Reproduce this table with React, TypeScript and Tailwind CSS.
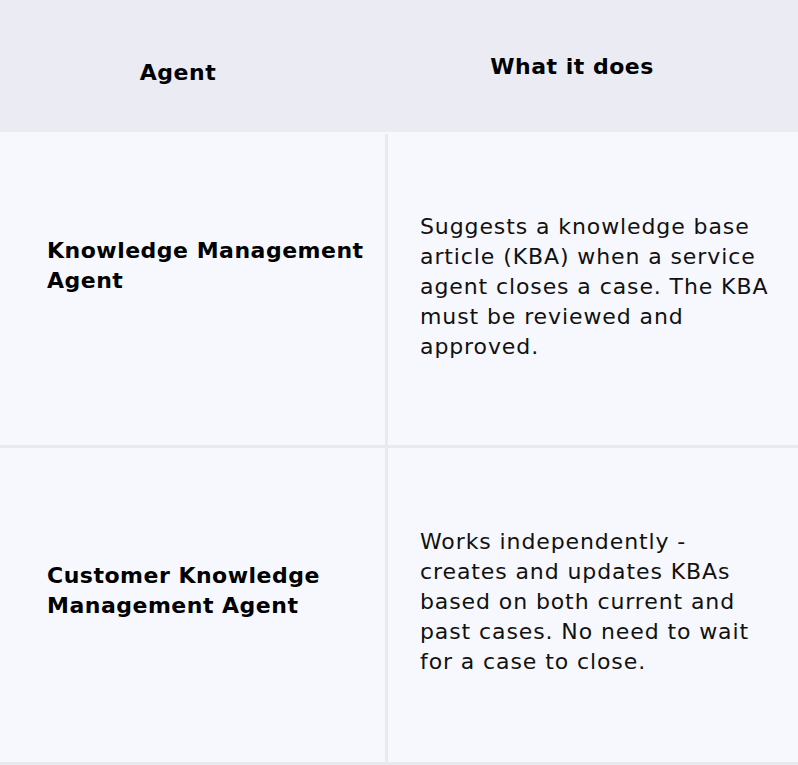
import React from "react";

const font = { fontFamily: "'DejaVu Sans', 'Noto Sans', sans-serif" };

export default function App() {
  return (
    <div className="w-[798px] h-[765px] bg-[#f7f8fd] text-[#111111]" style={font}>
      <div className="flex h-[132px] bg-[#ebebf4] font-bold text-[22px] leading-[30px] tracking-[0.5px] text-black">
        <div className="w-[385px] pr-[29px] pt-[58px] text-center">Agent</div>
        <div className="flex-1 pr-[39px] pt-[52px] text-center">What it does</div>
      </div>
      <div className="flex h-[316px] border-b-[3px] border-[#e8e8f1]">
        <div className="w-[385px] pl-[47px] pt-[104px] font-bold text-[22px] leading-[30px] tracking-[0.5px] text-black">
          Knowledge Management
          <br />
          Agent
        </div>
        <div className="flex-1 border-l-[3px] border-[#e8e8f1] mt-[2px] pl-[32px] pt-[78px] text-[22px] leading-[30px] tracking-[0.9px]">
          Suggests a knowledge base
          <br />
          article (KBA) when a service
          <br />
          agent closes a case. The KBA
          <br />
          must be reviewed and
          <br />
          approved.
        </div>
      </div>
      <div className="flex h-[317px] border-b-[3px] border-[#e8e8f1]">
        <div className="w-[385px] pl-[47px] pt-[113px] font-bold text-[22px] leading-[30px] tracking-[0.5px] text-black">
          Customer Knowledge
          <br />
          Management Agent
        </div>
        <div className="flex-1 border-l-[3px] border-[#e8e8f1] pl-[32px] pt-[79px] text-[22px] leading-[30px] tracking-[0.9px]">
          Works independently -
          <br />
          creates and updates KBAs
          <br />
          based on both current and
          <br />
          past cases. No need to wait
          <br />
          for a case to close.
        </div>
      </div>
    </div>
  );
}
